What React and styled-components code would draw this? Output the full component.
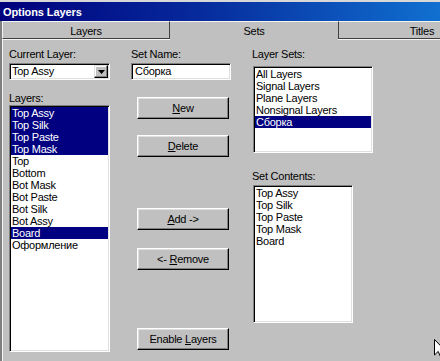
import styled, { createGlobalStyle } from 'styled-components'

const GlobalStyle = createGlobalStyle`
  body {
    margin: 0;
    background: #c0c0c0;
  }
`

const Window = styled.div`
  position: relative;
  width: 440px;
  height: 361px;
  overflow: hidden;
  display: flex;
  flex-direction: column;
  background: #c0c0c0;
  font-family: "Liberation Sans", Arial, sans-serif;
  font-size: 11px;
  letter-spacing: -0.25px;
  color: #000;
`

const TopStrip = styled.div`
  height: 2px;
  flex-shrink: 0;
  background: #d8d8d8;
`

const TitleBar = styled.div`
  height: 19px;
  flex-shrink: 0;
  box-sizing: border-box;
  padding: 1px 0 0 3px;
  display: flex;
  align-items: center;
  background: linear-gradient(90deg, #00007c 0%, #062a9c 45%, #1070d0 100%);
  color: #fff;
  font-weight: bold;
  letter-spacing: -0.1px;
  line-height: 13px;
`

const Body = styled.div`
  flex: 1;
  display: flex;
  flex-direction: column;
  border-left: 2px solid #808080;
`

const TabRow = styled.div`
  height: 18px;
  flex-shrink: 0;
  display: flex;
`

const Tab = styled.div`
  position: relative;
  z-index: 1;
  width: 168px;
  flex-shrink: 0;
  box-sizing: border-box;
  height: ${({ $active }) => ($active ? '19px' : '18px')};
  margin-bottom: ${({ $active }) => ($active ? '-1px' : '0')};
  padding-top: 3px;
  line-height: 13px;
  text-align: center;
  background: #c0c0c0;
  border-top: 1px solid #f4f4f4;
  border-left: 1px solid ${({ $side }) => ($side === 'right' ? '#404040' : '#f4f4f4')};
  border-right: 1px solid ${({ $side }) => ($side === 'left' ? '#404040' : 'transparent')};
  border-bottom: ${({ $active }) => ($active ? 'none' : '1px solid #404040')};
  ${({ $active }) => $active && 'border-left: none; border-right: none;'}
`

const Panel = styled.div`
  flex: 1;
  border-top: 1px solid #f4f4f4;
  border-left: 1px solid #f4f4f4;
  padding: 8px 0 0 6px;
  display: grid;
  grid-template-columns: 101px 100px 122px;
  column-gap: 21px;
  align-items: start;
`

const Column = styled.div`
  display: flex;
  flex-direction: column;
  align-items: flex-start;
`

const Label = styled.div`
  height: 13px;
  line-height: 13px;
  margin-top: ${({ $top }) => $top || 0}px;
  margin-bottom: ${({ $bottom }) => ($bottom === undefined ? 2 : $bottom)}px;
  white-space: nowrap;
`

const Sunken = styled.div`
  box-sizing: border-box;
  background: #fff;
  border: 1px solid;
  border-color: #808080 #fff #fff #808080;
  box-shadow: inset 1px 1px #000, inset -1px -1px #dfdfdf;
`

const Combo = styled(Sunken)`
  width: 101px;
  height: 17px;
  padding: 1px;
  display: flex;
`

const ComboText = styled.div`
  flex: 1;
  line-height: 13px;
  padding-left: 1px;
  white-space: nowrap;
`

const DropButton = styled.div`
  width: 14px;
  height: 13px;
  box-sizing: border-box;
  background: #c0c0c0;
  border: 1px solid;
  border-color: #dfdfdf #000 #000 #dfdfdf;
  box-shadow: inset -1px -1px #808080, inset 1px 1px #fff;
  display: flex;
  align-items: center;
  justify-content: center;
`

const TextInput = styled(Sunken)`
  width: 100px;
  height: 17px;
  padding: 1px 1px 1px 3px;
  line-height: 13px;
`

const ListBox = styled(Sunken)`
  width: ${({ $w }) => $w}px;
  height: ${({ $h }) => $h}px;
  margin-left: ${({ $left }) => $left || 0}px;
  padding: 1px;
  overflow: hidden;
`

const Item = styled.div`
  height: 12px;
  line-height: 12px;
  padding-left: 1px;
  white-space: nowrap;
  background: ${({ $selected }) => ($selected ? '#000080' : 'transparent')};
  color: ${({ $selected }) => ($selected ? '#fff' : '#000')};
`

const Button = styled.div`
  width: 92px;
  height: 22px;
  box-sizing: border-box;
  margin-left: 6px;
  margin-top: ${({ $top }) => $top}px;
  background: #c0c0c0;
  border: 1px solid;
  border-color: #fff #000 #000 #fff;
  box-shadow: inset -1px -1px #808080, inset 1px 1px #dfdfdf;
  line-height: 20px;
  text-align: center;
  white-space: nowrap;
`

const Cursor = styled.svg`
  position: absolute;
  left: 434px;
  top: 339px;
`

const layers = [
  ['Top Assy', true],
  ['Top Silk', true],
  ['Top Paste', true],
  ['Top Mask', true],
  ['Top', false],
  ['Bottom', false],
  ['Bot Mask', false],
  ['Bot Paste', false],
  ['Bot Silk', false],
  ['Bot Assy', false],
  ['Board', true],
  ['Оформление', false],
]

const layerSets = ['All Layers', 'Signal Layers', 'Plane Layers', 'Nonsignal Layers', 'Сборка']
const contents = ['Top Assy', 'Top Silk', 'Top Paste', 'Top Mask', 'Board']

const App = () => {
  return (
    <Window>
      <GlobalStyle />
      <TopStrip />
      <TitleBar>Options Layers</TitleBar>
      <Body>
        <TabRow>
          <Tab $side="left">Layers</Tab>
          <Tab $active>Sets</Tab>
          <Tab $side="right">Titles</Tab>
        </TabRow>
        <Panel>
          <Column>
            <Label>Current Layer:</Label>
            <Combo>
              <ComboText>Top Assy</ComboText>
              <DropButton>
                <svg width="7" height="4" viewBox="0 0 7 4">
                  <polygon points="0,0 7,0 3.5,4" fill="#000" />
                </svg>
              </DropButton>
            </Combo>
            <Label $top={12} $bottom={0}>Layers:</Label>
            <ListBox $w={101} $h={247}>
              {layers.map(([name, sel]) => (
                <Item key={name} $selected={sel}>{name}</Item>
              ))}
            </ListBox>
          </Column>

          <Column>
            <Label>Set Name:</Label>
            <TextInput>Сборка</TextInput>
            <Button $top={17}><u>N</u>ew</Button>
            <Button $top={16}><u>D</u>elete</Button>
            <Button $top={51}><u>A</u>dd -&gt;</Button>
            <Button $top={18}>&lt;- <u>R</u>emove</Button>
            <Button $top={58}>Enable <u>L</u>ayers</Button>
          </Column>

          <Column>
            <Label $bottom={5}>Layer Sets:</Label>
            <ListBox $w={120} $h={87} $left={1}>
              {layerSets.map((name) => (
                <Item key={name} $selected={name === 'Сборка'}>{name}</Item>
              ))}
            </ListBox>
            <Label $top={17}>Set Contents:</Label>
            <ListBox $w={100} $h={138} $left={1}>
              {contents.map((name) => (
                <Item key={name}>{name}</Item>
              ))}
            </ListBox>
          </Column>
        </Panel>
      </Body>
      <Cursor width="12" height="20" viewBox="0 0 12 20">
        <path d="M0.5 0.5 L0.5 16 L4.2 12.4 L7 18.8 L9 17.9 L6.3 11.6 L11.2 11.6 Z" fill="#fff" stroke="#000" strokeWidth="1" />
      </Cursor>
    </Window>
  )
}

export default App
